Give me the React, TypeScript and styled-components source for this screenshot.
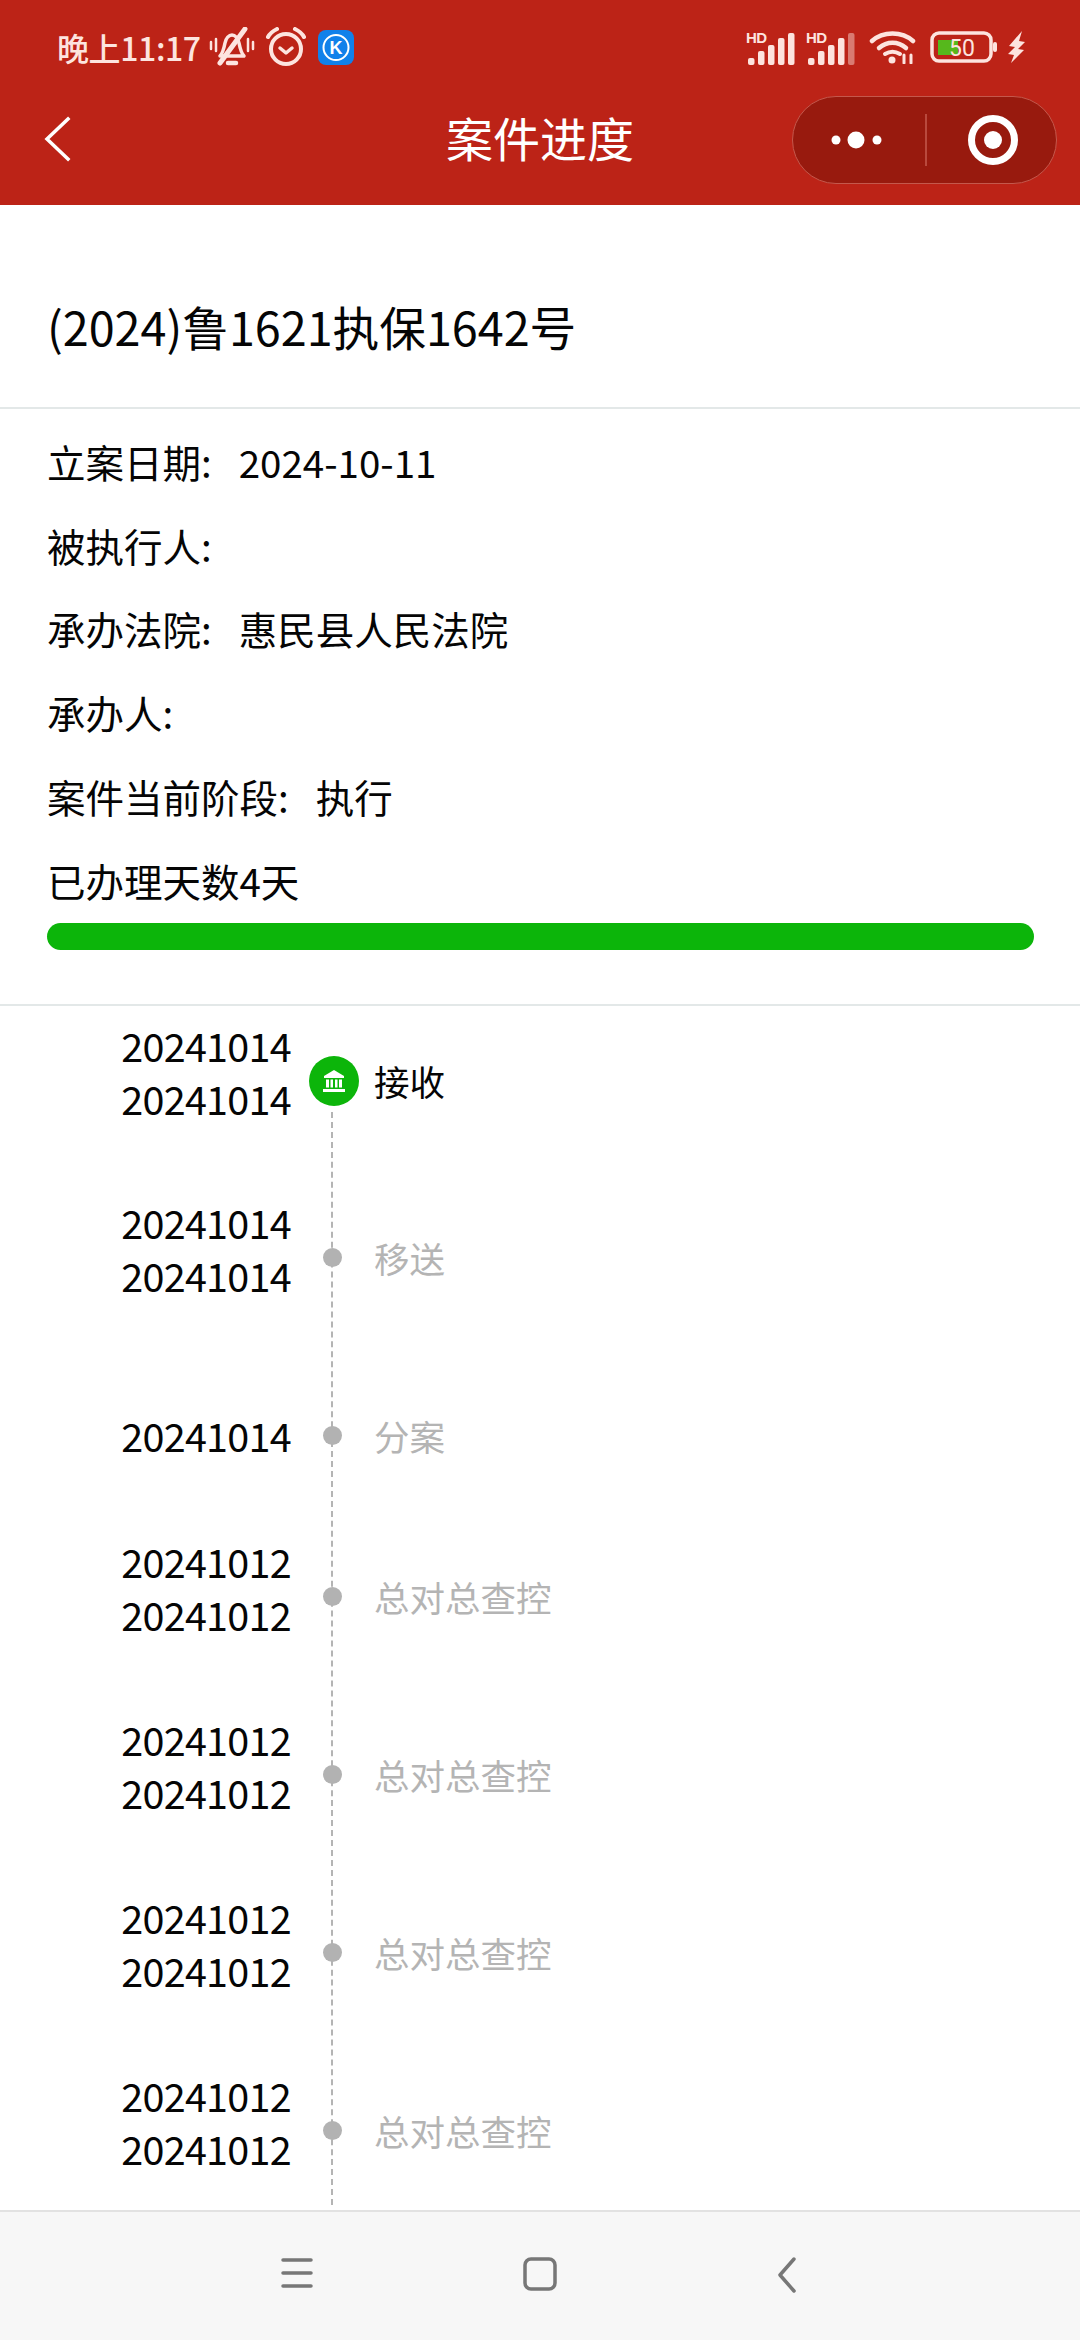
import React from "react";
import styled, { createGlobalStyle } from "styled-components";

const Global = createGlobalStyle`
  html, body { margin: 0; padding: 0; background: #fff; }
  * { box-sizing: border-box; }
`;

const Page = styled.div`
  width: 1080px;
  height: 2340px;
  display: flex;
  flex-direction: column;
  overflow: hidden;
  background: #fff;
  color: #050505;
  font-family: "Noto Sans CJK SC", "Noto Sans", sans-serif;
`;

const Header = styled.header`
  height: 205px;
  flex: none;
  background: #bc2317;
  display: flex;
  flex-direction: column;
`;

const StatusBar = styled.div`
  height: 94px;
  display: flex;
  align-items: center;
  justify-content: space-between;
  padding: 0 55px 0 57px;
  color: #fde4df;
`;

const StatusGroup = styled.div`
  display: flex;
  align-items: center;
`;

const IconBox = styled.span<{ $ml?: number }>`
  display: flex;
  margin-left: ${(p) => p.$ml ?? 0}px;
`;

const Clock = styled.span`
  font-size: 32px;
  font-weight: 500;
  letter-spacing: -0.4px;
  margin-right: 8px;
  white-space: nowrap;
`;

const NavBar = styled.div`
  height: 111px;
  display: grid;
  grid-template-columns: 1fr auto 1fr;
  align-items: start;
`;

const BackButton = styled.div`
  padding: 22px 0 0 43px;
`;

const NavTitle = styled.div`
  font-size: 47px;
  line-height: 64px;
  padding-top: 11px;
  color: #fff;
`;

const CapsuleSlot = styled.div`
  display: flex;
  justify-content: flex-end;
  padding: 2px 23px 0 0;
`;

const Capsule = styled.div`
  width: 265px;
  height: 88px;
  border-radius: 44px;
  background: #981a0e;
  border: 1.5px solid #c4584c;
  display: grid;
  grid-template-columns: 132px 1.5px 1fr;
  align-items: center;
  justify-items: center;
`;

const CapsuleRule = styled.div`
  width: 1.5px;
  height: 52px;
  background: #b9493d;
`;

const TargetBox = styled.span`
  display: flex;
  margin-left: 3px;
`;

const TitleBlock = styled.section`
  height: 204px;
  flex: none;
  display: flex;
  align-items: flex-start;
  padding: 86px 47px 0;
  border-bottom: 2px solid #e3e8e8;
`;

const CaseTitle = styled.h1`
  margin: 0;
  font-size: 46.7px;
  line-height: 70px;
  font-weight: 400;
`;

const InfoBlock = styled.section`
  height: 597px;
  flex: none;
  padding: 10px 47px 0;
  border-bottom: 2px solid #e3e8e8;
`;

const InfoRow = styled.div`
  height: 83.8px;
  display: flex;
  align-items: center;
  font-size: 38.5px;
  white-space: nowrap;
`;

const InfoValue = styled.span`
  margin-left: 27px;
`;

const ProgressTrack = styled.div`
  height: 27px;
  width: 987px;
  margin-top: 1px;
  border-radius: 13.5px;
  background: #0cb50a;
`;

const Timeline = styled.section`
  position: relative;
  flex: 1;
  padding-top: 13px;
  min-height: 0;
`;

const Spine = styled.div`
  position: absolute;
  left: 331px;
  top: 106px;
  bottom: 5px;
  width: 0;
  border-left: 2px dashed #b4b4b4;
`;

const StepRow = styled.div<{ $height: number }>`
  position: relative;
  height: ${(p) => p.$height}px;
  display: grid;
  grid-template-columns: 291px 83px 1fr;
  align-items: start;
`;

const Dates = styled.div<{ $single?: boolean }>`
  margin-top: ${(p) => (p.$single ? 35 : 0)}px;
  text-align: right;
  font-size: 39.5px;
  line-height: 52.8px;
  letter-spacing: -0.7px;
`;

const NodeCell = styled.div`
  height: 123px;
  display: flex;
  align-items: center;
  justify-content: center;
`;

const ActiveNode = styled.div`
  width: 50px;
  height: 50px;
  border-radius: 50%;
  background: #0cb50a;
  display: flex;
  align-items: center;
  justify-content: center;
  margin-left: 2px;
`;

const Dot = styled.div`
  width: 19px;
  height: 19px;
  border-radius: 50%;
  background: #b2b2b2;
`;

const StepLabel = styled.div<{ $active?: boolean }>`
  height: 123px;
  display: flex;
  align-items: center;
  font-size: 35.5px;
  color: ${(p) => (p.$active ? "#050505" : "#b4b4b4")};
`;

const SystemBar = styled.footer`
  height: 130px;
  flex: none;
  background: #f7f7f7;
  border-top: 2px solid #e2e2e2;
  display: grid;
  grid-template-columns: 313px 454px 1fr;
  padding-top: 45px;
`;

const SystemSlot = styled.div<{ $pos: "end" | "center" | "start" }>`
  display: flex;
  justify-content: ${(p) => (p.$pos === "center" ? "center" : p.$pos === "end" ? "flex-end" : "flex-start")};
`;

const Muted = () => (
  <svg width="46" height="40" viewBox="0 0 46 40" fill="none" stroke="#fde4df" strokeWidth="3.5" strokeLinecap="round" strokeLinejoin="round">
    <path d="M11 29c3-3 4-8 5-13 1-5 4-8 7-8s6 3 7 8c1 5 2 10 5 13z" />
    <path d="M19 36h8" strokeWidth="4.5" />
    <path d="M36 2 11 36" strokeWidth="5" />
    <path d="M2 15v7M7 12v12M39 12v12M44 15v7" strokeWidth="2.5" />
  </svg>
);

const Alarm = () => (
  <svg width="42" height="40" viewBox="0 0 42 40" fill="none" stroke="#fde4df" strokeLinecap="round" strokeLinejoin="round">
    <circle cx="21" cy="22" r="15" strokeWidth="4" />
    <path d="M15 21l6 5 6-5" strokeWidth="3.5" />
    <path d="M3 10c2-4 5-6 9-8M39 10c-2-4-5-6-9-8" strokeWidth="4" />
  </svg>
);

const KApp = () => (
  <svg width="36" height="35" viewBox="0 0 36 35">
    <rect width="36" height="35" rx="8" fill="#1181ea" />
    <circle cx="18" cy="17.5" r="12.5" fill="none" stroke="#fff" strokeWidth="2" />
    <text x="18" y="24" textAnchor="middle" fontSize="18" fontWeight="700" fill="#fff" fontFamily="Liberation Sans">K</text>
  </svg>
);

const Signal = ({ dim }: { dim?: boolean }) => (
  <svg width="50" height="36" viewBox="0 -2 50 36" fill="#fde4df">
    <text x="0" y="12" fontSize="15" fontWeight="700" fontFamily="Liberation Sans" letterSpacing="-0.5">HD</text>
    <rect x="2" y="27" width="6.5" height="7" rx="2" />
    <rect x="12" y="20" width="6.5" height="14" rx="2" />
    <rect x="22" y="14" width="6.5" height="20" rx="2" />
    <rect x="32" y="7" width="6.5" height="27" rx="2" />
    <rect x="42" y="2" width="6.5" height="32" rx="2" opacity={dim ? 0.45 : 1} />
  </svg>
);

const Wifi = () => (
  <svg width="47" height="34" viewBox="0 0 47 34" fill="none" stroke="#fde4df" strokeLinecap="round">
    <path d="M3 11C14 1 33 1 44 11" strokeWidth="4.5" />
    <path d="M10 18c8-7 19-7 27 0" strokeWidth="4.5" />
    <path d="M16 24c5-3 10-3 15 0" strokeWidth="4" />
    <circle cx="23" cy="30" r="3.5" fill="#fde4df" stroke="none" />
    <path d="M35 25v8M42 25v8" strokeWidth="3" />
  </svg>
);

const Battery = () => (
  <svg width="68" height="32" viewBox="0 0 68 32">
    <rect x="2" y="2" width="59" height="28" rx="7" fill="none" stroke="#fde4df" strokeWidth="3.5" />
    <rect x="8" y="9" width="20" height="15" fill="#56b81c" />
    <rect x="63" y="11" width="4" height="10" rx="2" fill="#fde4df" />
    <text x="32" y="25" textAnchor="middle" fontSize="23" fontFamily="Roboto" fill="#fde4df">50</text>
  </svg>
);

const Bolt = () => (
  <svg width="18" height="32" viewBox="0 0 18 32" fill="#fde4df">
    <path d="M15 0 2 15l6 1-7 7 6 1-3 8 13-13-6-1 7-7-6-1z" />
  </svg>
);

const Chevron = () => (
  <svg width="30" height="46" viewBox="0 0 30 46" fill="none" stroke="#fff" strokeWidth="3.5" strokeLinecap="square">
    <path d="M25 3 4 23l21 20" />
  </svg>
);

const Dots = () => (
  <svg width="56" height="20" viewBox="0 0 56 20" fill="#fff">
    <circle cx="5" cy="10" r="4.5" />
    <circle cx="25" cy="10" r="8.5" />
    <circle cx="46" cy="10" r="4.5" />
  </svg>
);

const Target = () => (
  <svg width="50" height="50" viewBox="0 0 50 50">
    <circle cx="25" cy="25" r="21.5" fill="none" stroke="#fff" strokeWidth="7" />
    <circle cx="25" cy="25" r="9" fill="#fff" />
  </svg>
);

const Bank = () => (
  <svg width="24" height="24" viewBox="0 0 24 24" fill="#fff">
    <path d="M12 1 22 7v2H2V7z" />
    <rect x="4" y="10.5" width="3" height="8" />
    <rect x="8.5" y="10.5" width="2.5" height="8" />
    <rect x="13" y="10.5" width="2.5" height="8" />
    <rect x="17" y="10.5" width="3" height="8" />
    <rect x="1" y="20" width="22" height="3" />
  </svg>
);

const MenuIcon = () => (
  <svg width="32" height="32" viewBox="0 0 32 32" stroke="#777" strokeWidth="3.5" strokeLinecap="round">
    <path d="M2 3h28M2 16h28M2 29h28" />
  </svg>
);

const HomeIcon = () => (
  <svg width="34" height="34" viewBox="0 0 34 34" fill="none" stroke="#777" strokeWidth="3.5">
    <rect x="2" y="2" width="30" height="30" rx="6" />
  </svg>
);

const BackIcon = () => (
  <svg width="20" height="36" viewBox="0 0 20 36" fill="none" stroke="#777" strokeWidth="3.5" strokeLinecap="round" strokeLinejoin="round">
    <path d="M17 2 3 18l14 16" />
  </svg>
);

const info: [string, string][] = [
  ["立案日期:", "2024-10-11"],
  ["被执行人:", ""],
  ["承办法院:", "惠民县人民法院"],
  ["承办人:", ""],
  ["案件当前阶段:", "执行"],
];

const steps = [
  { dates: ["20241014", "20241014"], label: "接收", active: true, h: 177 },
  { dates: ["20241014", "20241014"], label: "移送", h: 178 },
  { dates: ["20241014"], label: "分案", h: 161 },
  { dates: ["20241012", "20241012"], label: "总对总查控", h: 178 },
  { dates: ["20241012", "20241012"], label: "总对总查控", h: 178 },
  { dates: ["20241012", "20241012"], label: "总对总查控", h: 178 },
  { dates: ["20241012", "20241012"], label: "总对总查控", h: 178 },
];

export default function App() {
  return (
    <Page>
      <Global />
      <Header>
        <StatusBar>
          <StatusGroup>
            <Clock>晚上11:17</Clock>
            <Muted />
            <IconBox $ml={10}>
              <Alarm />
            </IconBox>
            <IconBox $ml={11}>
              <KApp />
            </IconBox>
          </StatusGroup>
          <StatusGroup>
            <Signal />
            <IconBox $ml={10}>
              <Signal dim />
            </IconBox>
            <IconBox $ml={13}>
              <Wifi />
            </IconBox>
            <IconBox $ml={14}>
              <Battery />
            </IconBox>
            <IconBox $ml={9}>
              <Bolt />
            </IconBox>
          </StatusGroup>
        </StatusBar>
        <NavBar>
          <BackButton>
            <Chevron />
          </BackButton>
          <NavTitle>案件进度</NavTitle>
          <CapsuleSlot>
            <Capsule>
              <Dots />
              <CapsuleRule />
              <TargetBox>
                <Target />
              </TargetBox>
            </Capsule>
          </CapsuleSlot>
        </NavBar>
      </Header>
      <TitleBlock>
        <CaseTitle>(2024)鲁1621执保1642号</CaseTitle>
      </TitleBlock>
      <InfoBlock>
        {info.map(([k, v]) => (
          <InfoRow key={k}>
            {k}
            {v && <InfoValue>{v}</InfoValue>}
          </InfoRow>
        ))}
        <InfoRow>已办理天数4天</InfoRow>
        <ProgressTrack />
      </InfoBlock>
      <Timeline>
        <Spine />
        {steps.map((s, i) => (
          <StepRow key={i} $height={s.h}>
            <Dates $single={s.dates.length === 1}>
              {s.dates.map((d, j) => (
                <div key={j}>{d}</div>
              ))}
            </Dates>
            <NodeCell>
              {s.active ? (
                <ActiveNode>
                  <Bank />
                </ActiveNode>
              ) : (
                <Dot />
              )}
            </NodeCell>
            <StepLabel $active={s.active}>{s.label}</StepLabel>
          </StepRow>
        ))}
      </Timeline>
      <SystemBar>
        <SystemSlot $pos="end">
          <IconBox $ml={0}>
            <MenuIcon />
          </IconBox>
        </SystemSlot>
        <SystemSlot $pos="center">
          <HomeIcon />
        </SystemSlot>
        <SystemSlot $pos="start">
          <IconBox $ml={10}>
            <BackIcon />
          </IconBox>
        </SystemSlot>
      </SystemBar>
    </Page>
  );
}
